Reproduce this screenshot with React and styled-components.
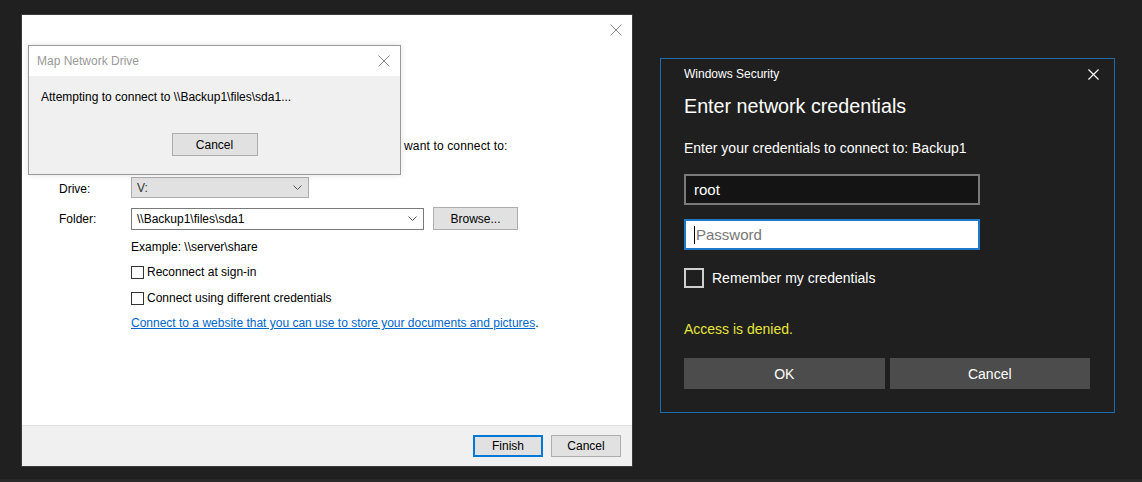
import styled, { createGlobalStyle } from 'styled-components';

const GlobalStyle = createGlobalStyle`
  html, body {
    margin: 0;
    padding: 0;
    background: #202020;
  }
  body {
    width: 1142px;
    height: 482px;
    overflow: hidden;
    font-family: "Liberation Sans", Arial, sans-serif;
  }
`;

const Desktop = styled.div`
  display: flex;
  align-items: flex-start;
  height: 479px;
  border-bottom: 3px solid #2a2a2a;
`;

/* ---------- left: Map Network Drive wizard ---------- */

const Wizard = styled.div`
  position: relative;
  box-sizing: border-box;
  margin: 14px 0 0 21px;
  width: 612px;
  height: 453px;
  background: #fff;
  border: 1px solid #3a3a3a;
  display: flex;
  flex-direction: column;
  font-size: 12px;
  color: #000;
`;

const WizardTitle = styled.div`
  height: 30px;
  display: flex;
  align-items: center;
  justify-content: flex-end;
  padding-right: 10px;
`;

const WizardBody = styled.div`
  flex: 1;
  padding-left: 37px;
`;

/* only the tail of the instruction shows beside the progress popup */
const Instruction = styled.div`
  margin: 93px 0 0 345px;
  line-height: 16px;
  letter-spacing: 0.15px;
  white-space: nowrap;
`;

const FieldGrid = styled.div`
  margin-top: 23px;
  display: grid;
  grid-template-columns: 72px auto;
  row-gap: 9px;
  align-items: center;
`;

const FieldLabel = styled.span`
  padding-top: 2px;
`;

const FieldRow = styled.div`
  display: flex;
  align-items: center;
  gap: 9px;
`;

const Combo = styled.div`
  box-sizing: border-box;
  width: ${p => p.$w}px;
  height: ${p => p.$h}px;
  display: flex;
  align-items: center;
  justify-content: space-between;
  padding: 0 6px 0 5px;
  background: ${p => (p.$disabled ? '#e1e1e1' : '#fff')};
  border: 1px solid ${p => (p.$disabled ? '#adadad' : '#7a7a7a')};
  color: ${p => (p.$disabled ? '#333' : '#000')};
`;

const Indented = styled.div`
  margin-top: ${p => p.$mt}px;
  padding-left: 72px;
  line-height: 16px;
  display: flex;
  align-items: center;
  gap: 3px;
`;

const SmallBox = styled.span`
  box-sizing: border-box;
  width: 13px;
  height: 13px;
  border: 1px solid #333;
  background: #fff;
`;

const Link = styled.a`
  color: #0066cc;
  text-decoration: underline;
  cursor: pointer;
`;

const Footer = styled.div`
  height: 40px;
  background: #f0f0f0;
  border-top: 1px solid #dfdfdf;
  display: flex;
  align-items: center;
  justify-content: flex-end;
  gap: 8px;
  padding-right: 11px;
`;

const ClassicButton = styled.button`
  box-sizing: border-box;
  width: ${p => p.$w}px;
  height: ${p => p.$h}px;
  padding: 0;
  font-family: "Liberation Sans", Arial, sans-serif;
  font-size: 12px;
  color: #000;
  background: #e1e1e1;
  border: ${p => (p.$default ? '2px solid #0078d7' : '1px solid #adadad')};
`;

/* progress popup lying over the wizard */
const ProgressDialog = styled.div`
  position: absolute;
  top: 30px;
  left: 6px;
  width: 373px;
  height: 130px;
  box-sizing: border-box;
  border: 1px solid #9a9a9a;
  background: #f0f0f0;
  display: flex;
  flex-direction: column;
  box-shadow: 0 0 6px rgba(0, 0, 0, 0.12);
`;

const ProgressTitle = styled.div`
  height: 30px;
  background: #fff;
  display: flex;
  align-items: center;
  justify-content: space-between;
  padding: 0 10px 0 8px;
  color: #999;
`;

const ProgressText = styled.div`
  margin-top: 13px;
  padding-left: 12px;
  line-height: 16px;
`;

const ProgressActions = styled.div`
  margin-top: 28px;
  display: flex;
  justify-content: center;
`;

/* ---------- right: Windows Security ---------- */

const Security = styled.div`
  margin: 58px 0 0 27px;
  width: 455px;
  height: 355px;
  box-sizing: border-box;
  border: 1px solid #1c6db0;
  background: #1f1f1f;
  color: #fff;
  padding: 0 24px 0 23px;
  display: flex;
  flex-direction: column;
`;

const SecTitle = styled.div`
  height: 30px;
  margin-right: -9px;
  display: flex;
  align-items: center;
  justify-content: space-between;
  font-size: 12px;
`;

const SecHeading = styled.div`
  margin-top: 3px;
  font-size: 19.7px;
  line-height: 28px;
`;

const SecText = styled.div`
  margin-top: ${p => p.$mt}px;
  font-size: 14px;
  line-height: 20px;
  color: ${p => p.$color || '#fff'};
`;

const TextBox = styled.div`
  box-sizing: border-box;
  margin-top: ${p => p.$mt}px;
  width: 296px;
  height: 31px;
  display: flex;
  align-items: center;
  padding-left: 8px;
  font-size: 15px;
  background: ${p => (p.$focused ? '#fff' : '#141414')};
  border: 2px solid ${p => (p.$focused ? '#1f78c8' : '#7a7a7a')};
  color: ${p => (p.$focused ? '#777' : '#fff')};
`;

const Caret = styled.span`
  width: 1px;
  height: 18px;
  background: #000;
  margin-right: 1px;
`;

const CheckRow = styled.div`
  margin-top: 18px;
  display: flex;
  align-items: center;
  gap: 8px;
  font-size: 14px;
`;

const BigBox = styled.span`
  box-sizing: border-box;
  width: 20px;
  height: 20px;
  border: 2px solid #cfcfcf;
`;

const SecActions = styled.div`
  margin-top: 19px;
  display: flex;
  gap: 5px;
`;

const SecButton = styled.button`
  width: 201px;
  height: 31px;
  border: none;
  background: #4c4c4c;
  color: #fff;
  font-family: "Liberation Sans", Arial, sans-serif;
  font-size: 14px;
`;

const CloseIcon = ({ color, size = 12, width = 1 }) => (
  <svg width={size} height={size} viewBox="0 0 12 12">
    <path d="M0.5 0.5 L11.5 11.5 M11.5 0.5 L0.5 11.5" stroke={color} strokeWidth={width} fill="none" />
  </svg>
);

const Chevron = () => (
  <svg width="9" height="6" viewBox="0 0 9 6">
    <path d="M0.5 0.5 L4.5 4.5 L8.5 0.5" stroke="#555" strokeWidth="1" fill="none" />
  </svg>
);

export default function App() {
  return (
    <>
      <GlobalStyle />
      <Desktop>
        <Wizard>
          <WizardTitle>
            <CloseIcon color="#8a8a8a" />
          </WizardTitle>
          <WizardBody>
            <Instruction>want to connect to:</Instruction>
            <FieldGrid>
              <FieldLabel>Drive:</FieldLabel>
              <Combo $w={178} $h={21} $disabled>
                <span>V:</span>
                <Chevron />
              </Combo>
              <span>Folder:</span>
              <FieldRow>
                <Combo $w={293} $h={22}>
                  <span>\\Backup1\files\sda1</span>
                  <Chevron />
                </Combo>
                <ClassicButton $w={85} $h={23}>Browse...</ClassicButton>
              </FieldRow>
            </FieldGrid>
            <Indented $mt={9}>Example: \\server\share</Indented>
            <Indented $mt={9}>
              <SmallBox />
              <span>Reconnect at sign-in</span>
            </Indented>
            <Indented $mt={10}>
              <SmallBox />
              <span>Connect using different credentials</span>
            </Indented>
            <Indented $mt={9}>
              <span>
                <Link>Connect to a website that you can use to store your documents and pictures</Link>.
              </span>
            </Indented>
          </WizardBody>
          <Footer>
            <ClassicButton $w={70} $h={22} $default>Finish</ClassicButton>
            <ClassicButton $w={70} $h={22}>Cancel</ClassicButton>
          </Footer>

          <ProgressDialog>
            <ProgressTitle>
              <span>Map Network Drive</span>
              <CloseIcon color="#8a8a8a" />
            </ProgressTitle>
            <ProgressText>Attempting to connect to \\Backup1\files\sda1...</ProgressText>
            <ProgressActions>
              <ClassicButton $w={86} $h={23}>Cancel</ClassicButton>
            </ProgressActions>
          </ProgressDialog>
        </Wizard>

        <Security>
          <SecTitle>
            <span>Windows Security</span>
            <CloseIcon color="#fff" size={11} width={1.3} />
          </SecTitle>
          <SecHeading>Enter network credentials</SecHeading>
          <SecText $mt={18}>Enter your credentials to connect to: Backup1</SecText>
          <TextBox $mt={16}>root</TextBox>
          <TextBox $mt={14} $focused>
            <Caret />
            <span>Password</span>
          </TextBox>
          <CheckRow>
            <BigBox />
            <span>Remember my credentials</span>
          </CheckRow>
          <SecText $mt={31} $color="#e5e53a">Access is denied.</SecText>
          <SecActions>
            <SecButton>OK</SecButton>
            <SecButton>Cancel</SecButton>
          </SecActions>
        </Security>
      </Desktop>
    </>
  );
}
